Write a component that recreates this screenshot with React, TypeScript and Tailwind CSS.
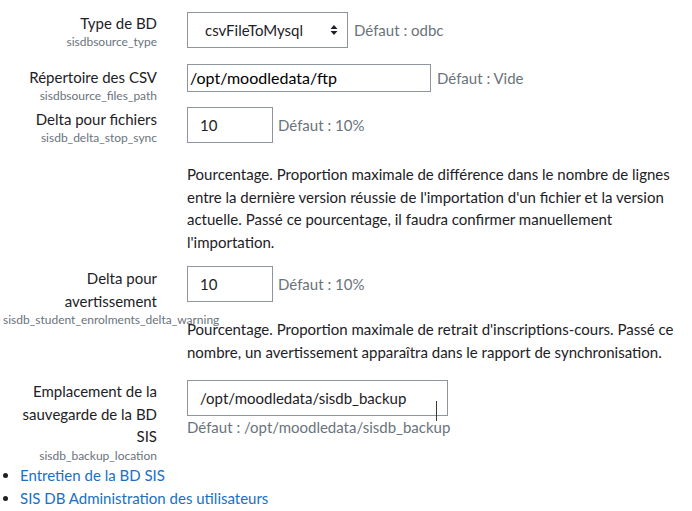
import React from "react";

const font = { fontFamily: "Lato, 'Noto Sans', sans-serif" };

function SelectArrows() {
  return (
    <svg width="8" height="12" viewBox="0 0 8 12" className="text-[#1d2125]">
      <path d="M4 1 L7.5 5 L0.5 5 Z" fill="currentColor" />
      <path d="M4 11 L7.5 7 L0.5 7 Z" fill="currentColor" />
    </svg>
  );
}

export default function App() {
  return (
    <div className="w-[692px] h-[511px] bg-white overflow-hidden text-[15px] text-[#1d2125]" style={font}>
      {/* Row 1 */}
      <div className="flex items-start mt-[12px]">
        <div className="ml-[3px] w-[154px] shrink-0 text-right">
          <div className="leading-[22px]">Type de BD</div>
          <div className="text-[12px] leading-[15px] text-[#6a737b] whitespace-nowrap">sisdbsource_type</div>
        </div>
        <div className="ml-[30px] flex items-center">
          <div className="h-[36px] w-[161px] border border-[#8f959e] flex items-center justify-between pl-[17px] pr-[9px]">
            <span className="text-[15px]">csvFileToMysql</span>
            <SelectArrows />
          </div>
          <span className="ml-[6px] text-[#6a737b]">Défaut : odbc</span>
        </div>
      </div>

      {/* Row 2 */}
      <div className="flex items-start mt-[15px]">
        <div className="ml-[3px] w-[154px] shrink-0 text-right pt-[2px]">
          <div className="leading-[22px]">Répertoire des CSV</div>
          <div className="text-[12px] leading-[15px] text-[#6a737b] whitespace-nowrap">sisdbsource_files_path</div>
        </div>
        <div className="ml-[30px] flex items-center">
          <div className="h-[28px] w-[244px] border border-[#8f959e] flex items-center pl-[2px]">
            <span className="text-[16px] text-black">/opt/moodledata/ftp</span>
          </div>
          <span className="ml-[6px] text-[#6a737b]">Défaut : Vide</span>
        </div>
      </div>

      {/* Row 3 */}
      <div className="flex items-start mt-[4px]">
        <div className="ml-[3px] w-[154px] shrink-0 text-right pt-[1px]">
          <div className="leading-[22px]">Delta pour fichiers</div>
          <div className="text-[12px] leading-[15px] text-[#6a737b] whitespace-nowrap">sisdb_delta_stop_sync</div>
        </div>
        <div className="ml-[30px] flex flex-col">
          <div className="flex items-center">
            <div className="h-[36px] w-[86px] border border-[#8f959e] flex items-center pl-[12px]">10</div>
            <span className="ml-[5px] text-[#6a737b]">Défaut : 10%</span>
          </div>
          <p className="mt-[20px] leading-[22.5px] whitespace-nowrap">
            Pourcentage. Proportion maximale de différence dans le nombre de lignes
            <br />
            entre la dernière version réussie de l'importation d'un fichier et la version
            <br />
            actuelle. Passé ce pourcentage, il faudra confirmer manuellement
            <br />
            l'importation.
          </p>
        </div>
      </div>

      {/* Row 4 */}
      <div className="flex items-start mt-[13px]">
        <div className="ml-[3px] w-[154px] shrink-0 text-right pt-[1px]">
          <div className="leading-[22.5px]">
            Delta pour
            <br />
            avertissement
          </div>
          <div className="text-[12px] leading-[15px] text-[#6a737b] whitespace-nowrap">sisdb_student_enrolments_delta_warning</div>
        </div>
        <div className="ml-[30px] flex flex-col">
          <div className="flex items-center">
            <div className="h-[36px] w-[86px] border border-[#8f959e] flex items-center pl-[12px]">10</div>
            <span className="ml-[5px] text-[#6a737b]">Défaut : 10%</span>
          </div>
          <p className="mt-[16px] leading-[22.5px] whitespace-nowrap">
            Pourcentage. Proportion maximale de retrait d'inscriptions-cours. Passé ce
            <br />
            nombre, un avertissement apparaîtra dans le rapport de synchronisation.
          </p>
        </div>
      </div>

      {/* Row 5 */}
      <div className="flex items-start mt-[17px]">
        <div className="ml-[3px] w-[154px] shrink-0 text-right">
          <div className="leading-[22.5px]">
            Emplacement de la
            <br />
            sauvegarde de la BD
            <br />
            SIS
          </div>
          <div className="text-[12px] leading-[15px] text-[#6a737b] whitespace-nowrap">sisdb_backup_location</div>
        </div>
        <div className="ml-[30px] flex flex-col">
          <div className="relative h-[36px] w-[261px] border border-[#8f959e] flex items-center pl-[12px]">
            /opt/moodledata/sisdb_backup
            <div className="absolute left-[248px] top-[20px] w-[1px] h-[20px] bg-[#3a3a3a]" />
          </div>
          <div className="leading-[22.5px] text-[#6a737b]">Défaut : /opt/moodledata/sisdb_backup</div>
        </div>
      </div>

      <ul className="list-disc pl-[20px] mt-[1px] text-[#1670c8] leading-[23.5px] marker:text-[#1d2125]">
        <li>Entretien de la BD SIS</li>
        <li>SIS DB Administration des utilisateurs</li>
      </ul>
    </div>
  );
}
